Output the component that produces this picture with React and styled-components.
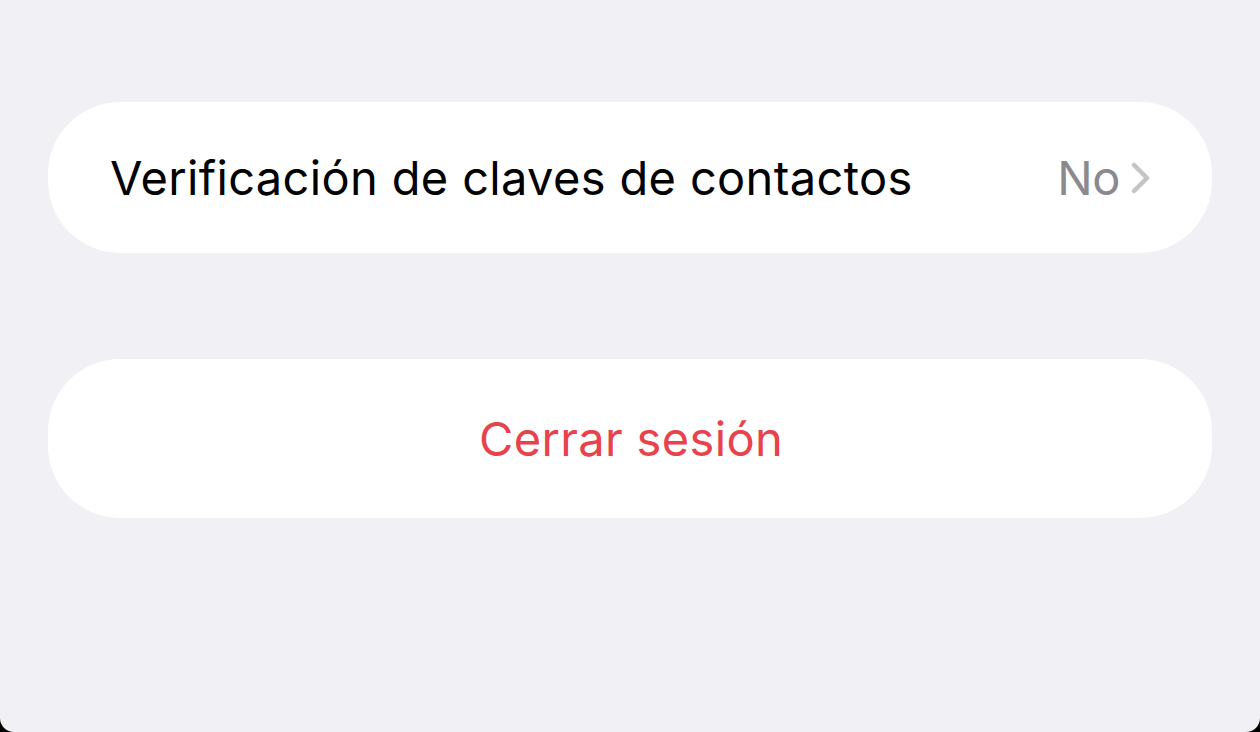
import React from 'react';
import styled, {createGlobalStyle} from 'styled-components';

const GlobalStyle = createGlobalStyle`
    html, body {
        margin: 0;
        padding: 0;
        background: #000;
    }
    * {
        box-sizing: border-box;
    }
`;

const Screen = styled.div`
    width: 1260px;
    height: 732px;
    background: #f0f0f5;
    border-bottom-left-radius: 14px;
    border-bottom-right-radius: 14px;
    padding: 102px 48px 0;
    display: flex;
    flex-direction: column;
    gap: 106px;
    font-family: Inter, "Liberation Sans", sans-serif;
`;

const Card = styled.div`
    height: ${props => props.tall ? '159px' : '151px'};
    background: #fff;
    border-radius: 72px;
    display: flex;
    align-items: center;
    justify-content: ${props => props.center ? 'center' : 'space-between'};
    padding: 0 60px 0 62px;
`;

const Label = styled.span`
    font-size: 47px;
    letter-spacing: 0.35px;
    color: ${props => props.danger ? '#e8434c' : '#000'};
`;

const Value = styled.span`
    display: flex;
    align-items: center;
    gap: 10px;
    font-size: 47px;
    letter-spacing: -0.4px;
    color: #8a8a8e;
`;

const Chevron = () => (
    <svg width="22" height="34" viewBox="0 0 22 34">
        <path d="M4 4 L17 17 L4 30" fill="none" stroke="#c4c4c7" strokeWidth="4.5"
              strokeLinecap="round" strokeLinejoin="round" />
    </svg>
);

export default function App() {
    return (
        <Screen>
            <GlobalStyle />
            <Card>
                <Label>Verificación de claves de contactos</Label>
                <Value>
                    No
                    <Chevron />
                </Value>
            </Card>
            <Card center tall>
                <Label danger>Cerrar sesión</Label>
            </Card>
        </Screen>
    );
}
